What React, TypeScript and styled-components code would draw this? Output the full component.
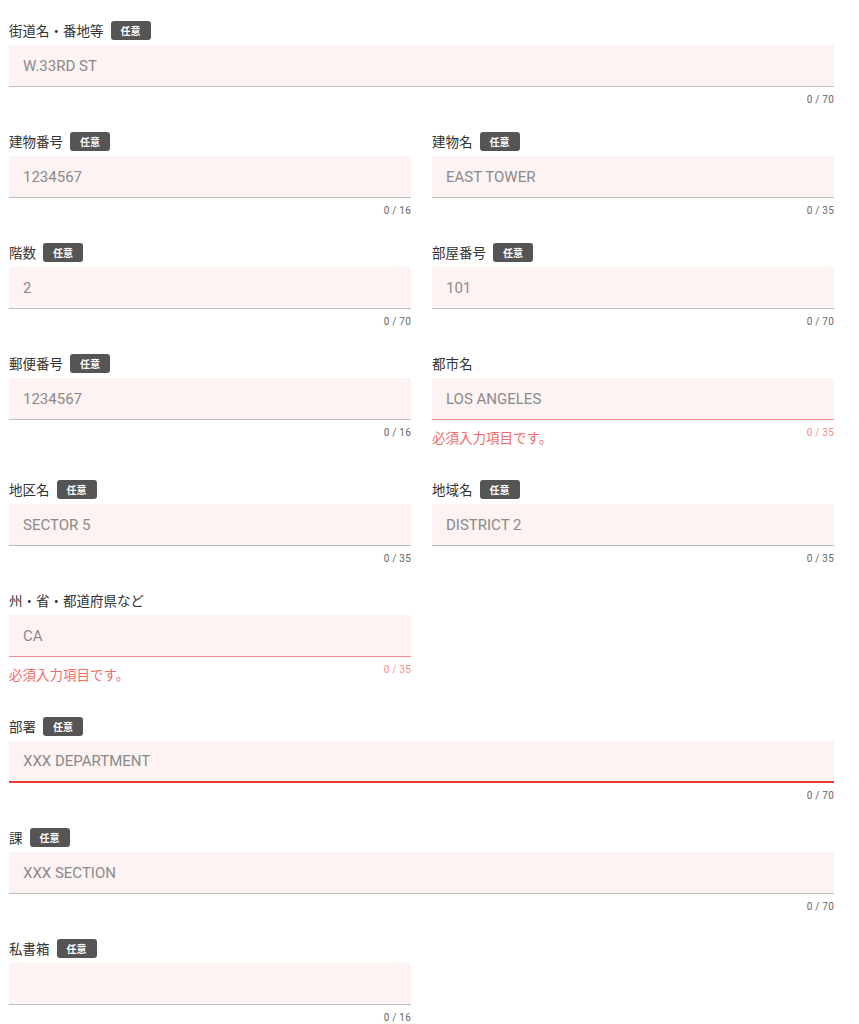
import * as React from 'react';
import styled, { createGlobalStyle } from 'styled-components';

const GlobalStyle = createGlobalStyle`
  body {
    margin: 0;
    background: #ffffff;
    font-family: Roboto, "Noto Sans CJK JP", sans-serif;
  }
`;

const FormWrapper = styled.div`
  display: grid;
  grid-template-columns: 402px 402px;
  column-gap: 21px;
  row-gap: 24px;
  padding: 19px 0 0 9px;
  width: 825px;
`;

const Field = styled.div<{ $wide?: boolean }>`
  display: flex;
  flex-direction: column;
  grid-column: ${p => (p.$wide ? '1 / span 2' : 'auto')};
`;

const LabelRow = styled.div`
  display: flex;
  align-items: center;
  gap: 7px;
  height: 22px;
  margin-bottom: 4px;
`;

const Label = styled.span`
  font-family: "Noto Sans CJK JP", sans-serif;
  font-size: 13.5px;
  color: #333333;
`;

const Badge = styled.span`
  display: inline-flex;
  align-items: center;
  justify-content: center;
  height: 19px;
  padding: 0 10px;
  border-radius: 3px;
  background: #555555;
  color: #ffffff;
  font-family: "Noto Sans CJK JP", sans-serif;
  font-size: 10px;
  font-weight: 700;
`;

const InputBox = styled.div<{ $state?: 'error' | 'focus' }>`
  display: flex;
  align-items: center;
  height: 42px;
  box-sizing: border-box;
  padding: 0 14px;
  background: #fdf3f2;
  border-bottom: ${p =>
    p.$state === 'focus'
      ? '2px solid #e53935'
      : p.$state === 'error'
      ? '1px solid #f58a8a'
      : '1px solid #bdbdbd'};
  font-family: Roboto, sans-serif;
  font-size: 15px;
  color: #8a8a8a;
`;

const Helper = styled.div`
  display: flex;
  justify-content: space-between;
  align-items: flex-start;
  padding-top: 6px;
`;

const ErrorText = styled.span`
  font-family: "Noto Sans CJK JP", sans-serif;
  font-size: 13.5px;
  line-height: 18px;
  color: #f26b6b;
  margin-top: 2px;
  margin-bottom: 8px;
`;

const Counter = styled.span<{ $error?: boolean }>`
  margin-left: auto;
  font-family: Roboto, sans-serif;
  font-size: 10px;
  line-height: 13px;
  letter-spacing: 0.2px;
  color: ${p => (p.$error ? '#f58a8a' : '#666666')};
`;

interface IFieldProps {
  label: string;
  optional?: boolean;
  value: string;
  max: number;
  wide?: boolean;
  state?: 'error' | 'focus';
}

const FormField = ({ label, optional, value, max, wide, state }: IFieldProps) => (
  <Field $wide={wide}>
    <LabelRow>
      <Label>{label}</Label>
      {optional && <Badge>任意</Badge>}
    </LabelRow>
    <InputBox $state={state}>{value}</InputBox>
    <Helper>
      {state === 'error' && <ErrorText>必須入力項目です。</ErrorText>}
      <Counter $error={state === 'error'}>0 / {max}</Counter>
    </Helper>
  </Field>
);

export default function App(): JSX.Element {
  return (
    <>
      <GlobalStyle />
      <FormWrapper>
        <FormField label="街道名・番地等" optional value="W.33RD ST" max={70} wide />
        <FormField label="建物番号" optional value="1234567" max={16} />
        <FormField label="建物名" optional value="EAST TOWER" max={35} />
        <FormField label="階数" optional value="2" max={70} />
        <FormField label="部屋番号" optional value="101" max={70} />
        <FormField label="郵便番号" optional value="1234567" max={16} />
        <FormField label="都市名" value="LOS ANGELES" max={35} state="error" />
        <FormField label="地区名" optional value="SECTOR 5" max={35} />
        <FormField label="地域名" optional value="DISTRICT 2" max={35} />
        <FormField label="州・省・都道府県など" value="CA" max={35} state="error" />
        <div />
        <FormField label="部署" optional value="XXX DEPARTMENT" max={70} wide state="focus" />
        <FormField label="課" optional value="XXX SECTION" max={70} wide />
        <FormField label="私書箱" optional value="" max={16} />
      </FormWrapper>
    </>
  );
}
